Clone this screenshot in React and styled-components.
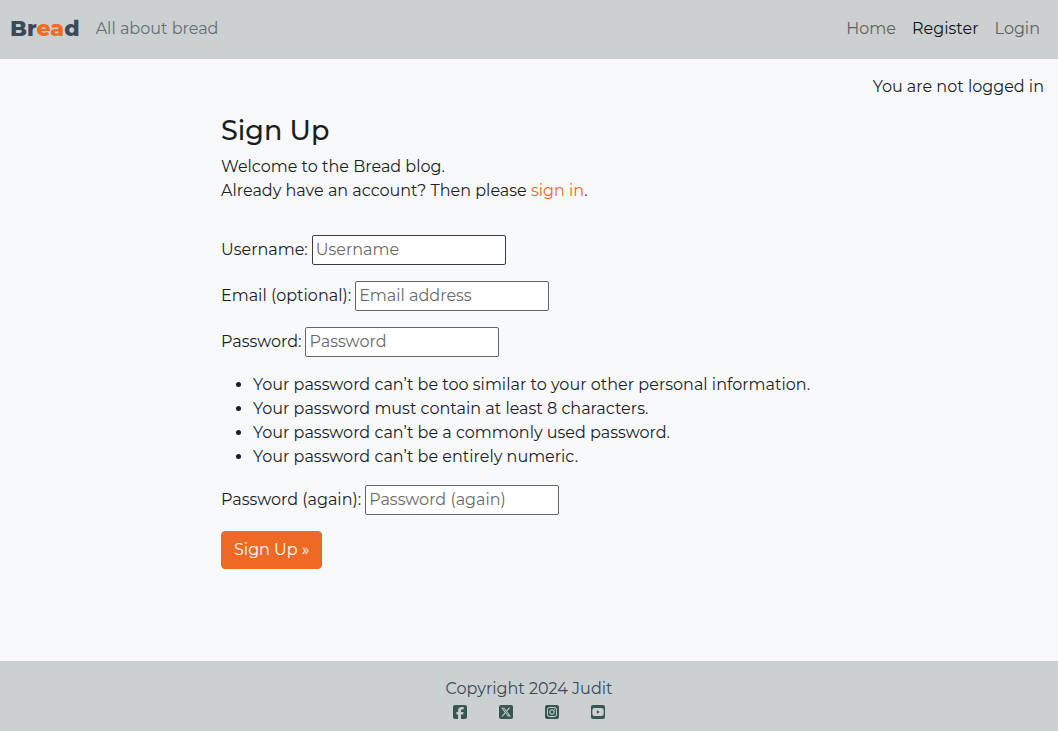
import React from "react";
import styled, { createGlobalStyle } from "styled-components";
import {
  FaSquareFacebook,
  FaSquareXTwitter,
  FaSquareInstagram,
  FaSquareYoutube,
} from "react-icons/fa6";

const GlobalStyle = createGlobalStyle`
  *, *::before, *::after { box-sizing: border-box; }
  body {
    margin: 0;
    background: #f8f9fb;
    color: #1b1d1f;
    font-family: Montserrat, Inter, "Open Sans", sans-serif;
    font-size: 16px;
    line-height: 24px;
  }
`;

const Page = styled.div`
  display: flex;
  flex-direction: column;
  min-height: 100vh;
`;

const Header = styled.header`
  display: flex;
  align-items: center;
  justify-content: space-between;
  flex-wrap: wrap;
  padding: 17px 18px 18px 10px;
  background: #cbd1d0;
`;

const BrandGroup = styled.div`
  display: flex;
  align-items: center;
  gap: 16px;
`;

const Brand = styled.a`
  color: #3b4a59;
  font-size: 22px;
  font-weight: 800;
  text-decoration: none;
`;

const Accent = styled.span`
  color: #f26b24;
`;

const Tagline = styled.span`
  color: #646e74;
`;

const Nav = styled.nav`
  display: flex;
  gap: 16px;
`;

const NavLink = styled.a`
  color: ${(p) => (p.$active ? "#141515" : "#5f6261")};
  text-decoration: none;
`;

const Status = styled.p`
  margin: 0;
  padding: 16px 14px 0;
  text-align: right;
`;

const Main = styled.main`
  flex: 1;
  width: 100%;
  max-width: 640px;
  margin: 0 auto;
  padding: 15px 12px 48px;
`;

const Title = styled.h1`
  margin: 0 0 7px;
  font-size: 27px;
  font-weight: 500;
  line-height: 34px;
`;

const Intro = styled.p`
  margin: 0 0 32px;
`;

const TextLink = styled.a`
  color: #ee6a24;
  text-decoration: none;
`;

const Form = styled.form`
  display: flex;
  flex-direction: column;
  align-items: flex-start;
  gap: 16px;
`;

const FieldRow = styled.div`
  display: flex;
  align-items: center;
  gap: 4px;
`;

const Input = styled.input`
  width: 194px;
  height: 30px;
  padding: 0 3px 2px;
  border: 1px solid ${(p) => (p.$strong ? "#3c3c3c" : "#656565")};
  border-radius: 2px;
  background: #fff;
  color: #1b1d1f;
  font: inherit;

  &::placeholder {
    color: #6b6b6b;
    opacity: 1;
  }
`;

const Rules = styled.ul`
  margin: 0;
  padding-left: 32px;
`;

const Submit = styled.button`
  padding: 6px 12px;
  border: 1px solid #ee6a24;
  border-radius: 4px;
  background: #ee6a24;
  color: #fff;
  font: inherit;
  cursor: pointer;
`;

const Footer = styled.footer`
  display: flex;
  flex-direction: column;
  align-items: center;
  padding: 16px 16px 11px;
  background: #cbd1d0;
  color: #3b4a59;
`;

const Copyright = styled.p`
  margin: 0 0 3px;
`;

const Socials = styled.div`
  display: flex;
  gap: 30px;
`;

const SocialLink = styled.a`
  display: flex;
  color: #38574f;
  font-size: 16px;
`;

const fields = [
  { id: "username", label: "Username:", placeholder: "Username", type: "text", strong: true },
  { id: "email", label: "Email (optional):", placeholder: "Email address", type: "email" },
  { id: "password1", label: "Password:", placeholder: "Password", type: "password" },
];

const rules = [
  "Your password can’t be too similar to your other personal information.",
  "Your password must contain at least 8 characters.",
  "Your password can’t be a commonly used password.",
  "Your password can’t be entirely numeric.",
];

const socials = [
  { name: "Facebook", Icon: FaSquareFacebook },
  { name: "X", Icon: FaSquareXTwitter },
  { name: "Instagram", Icon: FaSquareInstagram },
  { name: "YouTube", Icon: FaSquareYoutube },
];

function Field({ id, label, placeholder, type, strong }) {
  return (
    <FieldRow>
      <label htmlFor={id}>{label}</label>
      <Input id={id} name={id} type={type} placeholder={placeholder} $strong={strong} />
    </FieldRow>
  );
}

export default function App() {
  return (
    <Page>
      <GlobalStyle />
      <Header>
        <BrandGroup>
          <Brand href="#">
            Br<Accent>ea</Accent>d
          </Brand>
          <Tagline>All about bread</Tagline>
        </BrandGroup>
        <Nav>
          <NavLink href="#">Home</NavLink>
          <NavLink href="#" $active aria-current="page">Register</NavLink>
          <NavLink href="#">Login</NavLink>
        </Nav>
      </Header>
      <Status>You are not logged in</Status>
      <Main>
        <Title>Sign Up</Title>
        <Intro>
          Welcome to the Bread blog.
          <br />
          Already have an account? Then please <TextLink href="#">sign in</TextLink>.
        </Intro>
        <Form onSubmit={(e) => e.preventDefault()}>
          {fields.map((f) => (
            <Field key={f.id} {...f} />
          ))}
          <Rules>
            {rules.map((r) => (
              <li key={r}>{r}</li>
            ))}
          </Rules>
          <Field id="password2" label="Password (again):" placeholder="Password (again)" type="password" />
          <Submit type="submit">Sign Up »</Submit>
        </Form>
      </Main>
      <Footer>
        <Copyright>Copyright 2024 Judit</Copyright>
        <Socials>
          {socials.map(({ name, Icon }) => (
            <SocialLink key={name} href="#" aria-label={name}>
              <Icon />
            </SocialLink>
          ))}
        </Socials>
      </Footer>
    </Page>
  );
}
